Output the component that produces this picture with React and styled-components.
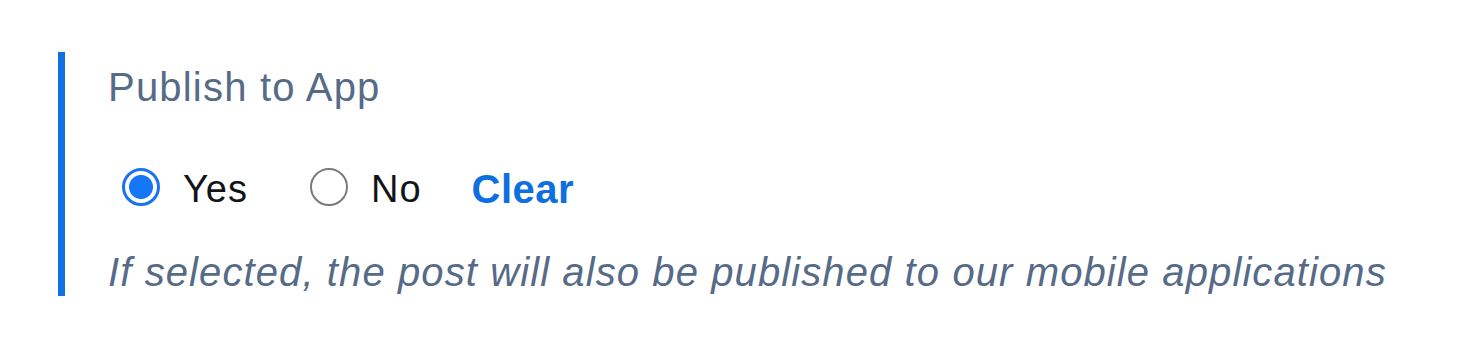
import React, { useState } from "react";
import styled, { createGlobalStyle } from "styled-components";

const GlobalStyle = createGlobalStyle`
  body {
    margin: 0;
    background: #ffffff;
    font-family: "Liberation Sans", Arial, sans-serif;
  }
`;

const App = () => {
  const [value, setValue] = useState("yes");

  return (
    <>
      <GlobalStyle />
      <Page>
        <Field>
          <Label>Publish to App</Label>
          <Options>
            <Option onClick={() => setValue("yes")}>
              <Radio checked={value === "yes"} />
              <OptionText>Yes</OptionText>
            </Option>
            <Option onClick={() => setValue("no")}>
              <Radio checked={value === "no"} />
              <OptionText>No</OptionText>
            </Option>
            <ClearButton onClick={() => setValue(null)}>Clear</ClearButton>
          </Options>
          <Help>If selected, the post will also be published to our mobile applications</Help>
        </Field>
      </Page>
    </>
  );
};

export default App;

const Page = styled.div`
  width: 1480px;
  height: 357px;
  padding: 52px 0 0 58px;
  box-sizing: border-box;
`;

const Field = styled.div`
  border-left: 7px solid #1170e4;
  padding-left: 43px;
  height: 244px;
  box-sizing: border-box;
  display: flex;
  flex-direction: column;
`;

const Label = styled.div`
  font-size: 40px;
  line-height: 48px;
  letter-spacing: 1.2px;
  color: #566b87;
  margin-top: 11px;
`;

const Options = styled.div`
  display: flex;
  align-items: center;
  height: 48px;
  margin-top: 54px;
  padding-left: 14px;
`;

const Option = styled.label`
  display: flex;
  align-items: center;
  margin-right: 62px;
  cursor: pointer;
  &:nth-child(2) {
    margin-right: 50px;
  }
`;

const Radio = styled.span`
  width: 38px;
  height: 38px;
  box-sizing: border-box;
  border-radius: 50%;
  border: ${(p) => (p.checked ? "3px solid #1a73f0" : "2.5px solid #7a7a7a")};
  background: ${(p) => (p.checked ? "radial-gradient(circle, #1577f6 0 11.5px, #fff 12.5px)" : "#fff")};
  margin-right: 23px;
  margin-bottom: 5px;
  flex-shrink: 0;
`;

const OptionText = styled.span`
  font-size: 38px;
  line-height: 48px;
  letter-spacing: 1px;
  color: #111418;
`;

const ClearButton = styled.button`
  border: none;
  background: none;
  padding: 0;
  font-family: inherit;
  font-size: 40px;
  line-height: 48px;
  font-weight: bold;
  letter-spacing: 0.5px;
  color: #0d6fe0;
  cursor: pointer;
`;

const Help = styled.div`
  font-size: 40px;
  line-height: 38px;
  font-style: italic;
  letter-spacing: 1.1px;
  color: #566b87;
  margin-top: 40px;
`;
